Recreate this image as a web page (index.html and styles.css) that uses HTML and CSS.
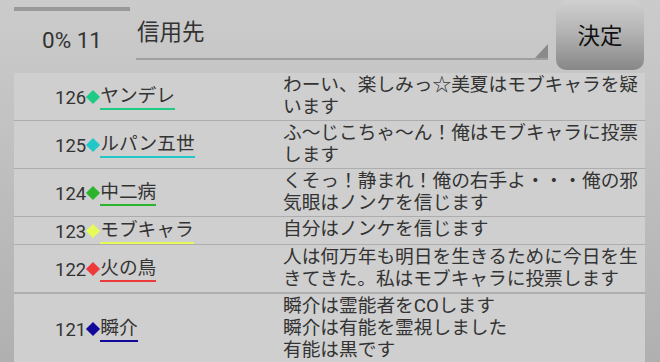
FILE: index.html
```html
<!DOCTYPE html>
<html lang="ja">
<head>
  <meta charset="UTF-8">
  <meta name="viewport" content="width=device-width, initial-scale=1.0">
  <title>投票ログ</title>
  <link rel="stylesheet" href="styles.css">
</head>
<body>
  <div class="top">
    <div class="stat">
      <div class="bar"></div>
      <div class="pct">0% 11</div>
    </div>
    <div class="spinner">信用先</div>
    <button class="decide">決定</button>
  </div>

  <div class="log">
    <div class="row">
      <div class="who"><span class="no">126</span><span class="mark c-yandere"></span><span class="name u-yandere">ヤンデレ</span></div>
      <div class="msg">わーい、楽しみっ☆美夏はモブキャラを疑います</div>
    </div>
    <div class="row">
      <div class="who"><span class="no">125</span><span class="mark c-lupin"></span><span class="name u-lupin">ルパン五世</span></div>
      <div class="msg">ふ～じこちゃ～ん！俺はモブキャラに投票します</div>
    </div>
    <div class="row">
      <div class="who"><span class="no">124</span><span class="mark c-chuni"></span><span class="name u-chuni">中二病</span></div>
      <div class="msg">くそっ！静まれ！俺の右手よ・・・俺の邪気眼はノンケを信じます</div>
    </div>
    <div class="row">
      <div class="who"><span class="no">123</span><span class="mark c-mob"></span><span class="name u-mob">モブキャラ</span></div>
      <div class="msg">自分はノンケを信じます</div>
    </div>
    <div class="row thick">
      <div class="who"><span class="no">122</span><span class="mark c-phoenix"></span><span class="name u-phoenix">火の鳥</span></div>
      <div class="msg">人は何万年も明日を生きるために今日を生きてきた。私はモブキャラに投票します</div>
    </div>
    <div class="row">
      <div class="who"><span class="no">121</span><span class="mark c-shun"></span><span class="name u-shun">瞬介</span></div>
      <div class="msg">瞬介は霊能者をCOします<br>瞬介は有能を霊視しました<br>有能は黒です</div>
    </div>
  </div>
</body>
</html>
```

FILE: styles.css
```css
html, body {
  margin: 0;
  height: 362px;
  overflow: hidden;
}
body {
  font-family: Roboto, "Noto Sans CJK JP", sans-serif;
  color: #333;
  background: linear-gradient(#cbcbcb, #c6c6c6 20%, #b0b0b0);
}

/* header */
.top {
  display: flex;
  height: 73px;
  padding-left: 14px;
  box-sizing: border-box;
}
.stat {
  width: 116px;
}
.bar {
  height: 4px;
  margin-top: 7px;
  background: #999;
}
.pct {
  text-align: center;
  font-size: 22.5px;
  line-height: 26px;
  margin-top: 16px;
  color: #333;
}
.spinner {
  position: relative;
  width: 412px;
  height: 60px;
  margin-left: 6px;
  padding-left: 1px;
  box-sizing: border-box;
  border-bottom: 2px solid #a0a0a0;
  font-size: 22.5px;
  line-height: 26px;
  padding-top: 19px;
  color: #333;
}
.spinner::after {
  content: "";
  position: absolute;
  right: 0;
  bottom: 0;
  border-left: 13px solid transparent;
  border-bottom: 14px solid #8a8a8a;
}
.decide {
  width: 88px;
  height: 70px;
  margin-left: 8px;
  border: none;
  border-radius: 10px;
  background: linear-gradient(#d0d0d0, #b4b4b4 45%, #878787);
  font-family: "Noto Sans CJK JP", sans-serif;
  font-size: 22.5px;
  color: #111;
  padding: 0 0 2px;
}

/* list */
.log {
  margin: 0 15px 0 14px;
  background: #cfcfcf;
  height: 290px;
}
.row {
  display: flex;
  border-bottom: 1px solid #adadad;
}
.row.thick {
  border-bottom-width: 2px;
}
.who {
  width: 269px;
  padding-left: 41px;
  box-sizing: border-box;
  display: flex;
  align-items: center;
  padding-top: 2px;
}
.no {
  font-size: 18.5px;
  color: #333;
}
.mark {
  flex: none;
  width: 10px;
  height: 10px;
  margin: -2px 2px 0 2px;
  background: currentColor;
  transform: rotate(45deg);
}
.name {
  font-size: 18.7px;
  line-height: 22px;
  padding-bottom: 1px;
  border-bottom: 2px solid;
}
.msg {
  width: 360px;
  font-size: 18.7px;
  line-height: 22px;
  padding: 1px 0 2px;
}

.c-yandere { color: #1ecb85; }
.c-lupin { color: #22c8c8; }
.c-chuni { color: #2cb52c; }
.c-mob { color: #e6fa5a; }
.c-phoenix { color: #ec3a3a; }
.c-shun { color: #12089a; }
.u-yandere { border-color: #1ecb85; }
.u-lupin { border-color: #22c8c8; }
.u-chuni { border-color: #2cb52c; }
.u-mob { border-color: #e6fa5a; }
.u-phoenix { border-color: #ec3a3a; }
.u-shun { border-color: #12089a; }
```
